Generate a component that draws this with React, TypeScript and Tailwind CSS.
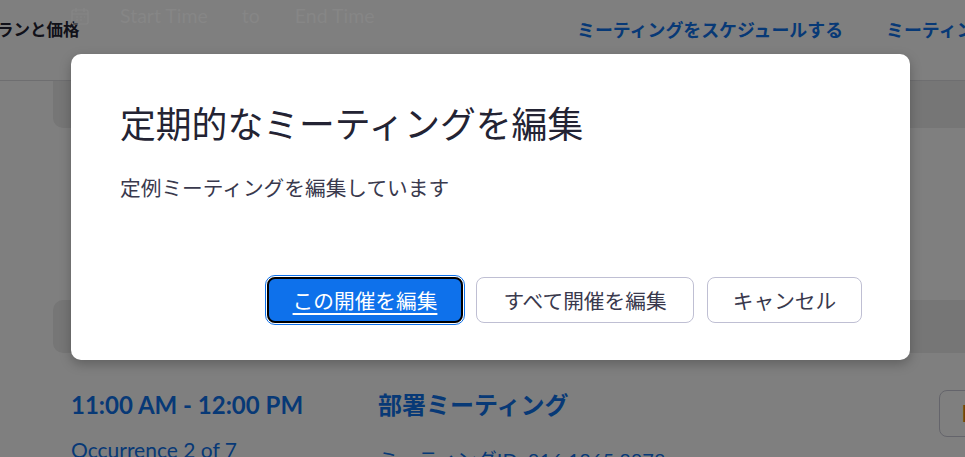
import React from "react";

export default function App() {
  const jp = "font-['Lato','Noto_Sans_CJK_JP',sans-serif]";
  return (
    <div className={`relative h-[457px] w-[965px] overflow-hidden bg-white ${jp}`}>
      {/* Underlying page */}
      <header className="flex h-[81px] items-center border-b border-[#dcdce0] bg-white">
        <div className="-ml-[3px] w-[580px] shrink-0 pb-[20px] text-[16.5px] font-bold leading-[20px] text-[#232333]">ランと価格</div>
        <nav className="flex shrink-0 items-center gap-[43px] whitespace-nowrap pb-[20px] text-[17.9px] font-bold leading-[22px] text-[#0e72ed]">
          <span>ミーティングをスケジュールする</span>
          <span>ミーティングを開始</span>
        </nav>
      </header>
      <div className="ml-[53px] h-[47px] rounded-bl-[10px] bg-[#ececec]" />
      <div className="ml-[53px] mt-[172px] h-[53px] rounded-l-[10px] bg-[#ececec]" />
      <div className="grid w-[1100px] grid-cols-[307px_561px_90px] pl-[71px] pt-[36px]">
        <div>
          <div className="whitespace-nowrap text-[24px] font-bold leading-[32px] text-[#0e72ed]">11:00 AM - 12:00 PM</div>
          <div className="mt-[15px] whitespace-nowrap text-[21px] leading-[28px] text-[#0e72ed]">Occurrence 2 of 7</div>
        </div>
        <div>
          <div className="whitespace-nowrap text-[24px] font-bold leading-[32px] text-[#0e72ed]">部署ミーティング</div>
          <div className="mt-[25px] whitespace-nowrap text-[20px] leading-[28px] text-[#0e72ed]">ミーティングID: 816 1865 8878</div>
        </div>
        <div className="mt-[1px] flex h-[47px] items-center rounded-[8px] border border-[#c9c9d6] pl-[22px] text-[18px] font-bold text-[#e8870e]">
          開始
        </div>
      </div>

      {/* Overlay */}
      <div className="absolute inset-0 bg-black/50" />

      {/* Faint date-range input showing through */}
      <div className="absolute left-[70px] top-[5px] flex items-center text-[19.5px] leading-[22px] text-[#868686]">
        <svg width="20" height="20" viewBox="0 0 20 20" fill="none" stroke="#868686" strokeWidth="1.2">
          <rect x="2" y="4" width="16" height="14" rx="1.5" />
          <path d="M2 8h16M6 2v4M14 2v4M6 11h2M10 11h2M14 11h1M6 14h2M10 14h2" />
        </svg>
        <span className="ml-[30px]">Start Time</span>
        <span className="ml-[34px]">to</span>
        <span className="ml-[35px]">End Time</span>
      </div>

      {/* Modal */}
      <div
        role="dialog"
        className="absolute left-[71px] top-[54px] flex h-[306px] w-[839px] flex-col rounded-[10px] bg-white pb-[37px] pl-[49px] pr-[48px] pt-[44px] shadow-[0_4px_12px_rgba(0,0,0,0.25)] font-['Noto_Sans_CJK_JP',sans-serif]"
      >
        <h2 className="whitespace-nowrap text-[35.8px] font-normal leading-[48px] text-[#232333]">
          定期的なミーティングを編集
        </h2>
        <p className="mt-[27px] whitespace-nowrap text-[20.7px] leading-[28px] text-[#39394d]">
          定例ミーティングを編集しています
        </p>
        <div className="mt-auto flex justify-end gap-[13px]">
          <button className="flex h-[46px] w-[196px] items-center justify-center rounded-[8px] border-2 border-black bg-[#0e71eb] text-[20.7px] leading-[28px] text-white underline underline-offset-[4px] outline outline-1 outline-offset-1 outline-[#0e71eb]">
            この開催を編集
          </button>
          <button className="flex h-[46px] w-[218px] items-center justify-center rounded-[8px] border border-[#bfbfd3] bg-white text-[20.7px] leading-[28px] text-[#39394d]">
            すべて開催を編集
          </button>
          <button className="flex h-[46px] w-[155px] items-center justify-center rounded-[8px] border border-[#bfbfd3] bg-white text-[20.7px] leading-[28px] text-[#39394d]">
            キャンセル
          </button>
        </div>
      </div>
    </div>
  );
}
